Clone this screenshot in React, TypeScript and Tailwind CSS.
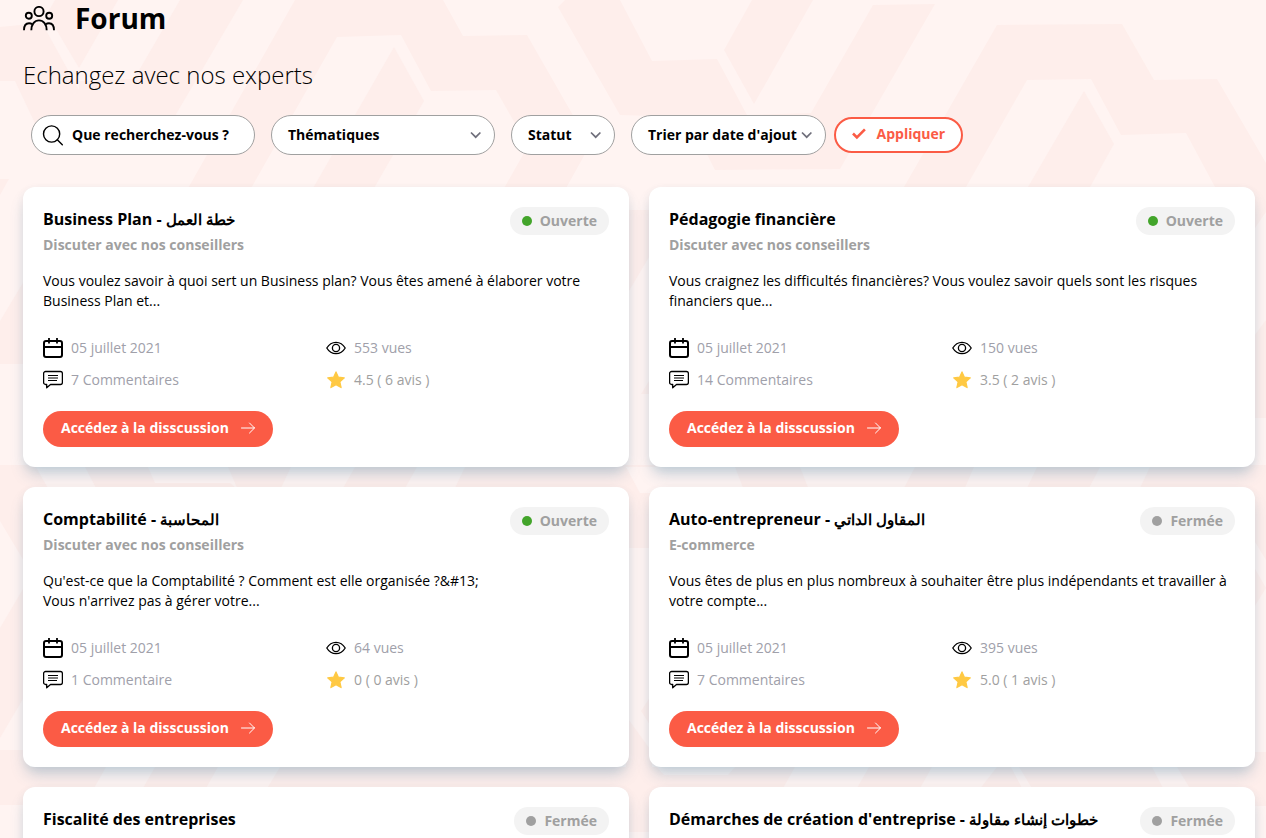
import React from "react";

type Topic = {
  title: string;
  arabic?: string;
  open: boolean;
  details?: {
    category: string;
    text: string[];
    comments: string;
    views: string;
    rating: string;
  };
};

const topics: Topic[] = [
  {
    title: "Business Plan",
    arabic: "خطة العمل",
    open: true,
    details: {
      category: "Discuter avec nos conseillers",
      text: ["Vous voulez savoir à quoi sert un Business plan? Vous êtes amené à élaborer votre", "Business Plan et..."],
      comments: "7 Commentaires",
      views: "553 vues",
      rating: "4.5 ( 6 avis )",
    },
  },
  {
    title: "Pédagogie financière",
    open: true,
    details: {
      category: "Discuter avec nos conseillers",
      text: ["Vous craignez les difficultés financières? Vous voulez savoir quels sont les risques", "financiers que..."],
      comments: "14 Commentaires",
      views: "150 vues",
      rating: "3.5 ( 2 avis )",
    },
  },
  {
    title: "Comptabilité",
    arabic: "المحاسبة",
    open: true,
    details: {
      category: "Discuter avec nos conseillers",
      text: ["Qu'est-ce que la Comptabilité ? Comment est elle organisée ?&#13;", "Vous n'arrivez pas à gérer votre..."],
      comments: "1 Commentaire",
      views: "64 vues",
      rating: "0 ( 0 avis )",
    },
  },
  {
    title: "Auto-entrepreneur",
    arabic: "المقاول الداتي",
    open: false,
    details: {
      category: "E-commerce",
      text: ["Vous êtes de plus en plus nombreux à souhaiter être plus indépendants et travailler à", "votre compte..."],
      comments: "7 Commentaires",
      views: "395 vues",
      rating: "5.0 ( 1 avis )",
    },
  },
  {
    title: "Fiscalité des entreprises",
    open: false,
  },
  {
    title: "Démarches de création d'entreprise",
    arabic: "خطوات إنشاء مقاولة",
    open: false,
  },
];

const darkShapes = [
  "0,27 42,23 79,90 79,81 134,79 180,0 243,0 165,133 40,134 15,81 0,81",
  "47,14 55,0 118,0 79,68",
  "295,0 443,0 463,36 527,35 590,145 565,190 503,190 528,146 496,90 431,91 401,35 337,37 250,190 187,190",
  "394,47 424,101 373,190 312,190",
  "565,0 620,0 652,61 717,59 747,115 811,113 873,5 935,4 840,169 715,170 688,117 620,115 558,7",
  "752,0 813,0 754,104 724,50",
  "997,25 1122,24 1154,80 1217,79 1266,163 1266,212 1240,250 1215,187 1186,133 1121,135 1091,79 1027,80 966,187 904,187",
  "1084,91 1114,144 1090,187 1028,187",
  "0,179 9,179 0,195",
  "0,321 24,281 40,364 0,364",
  "626,210 652,210 652,252 629,291 626,291",
  "641,394 652,376 652,394",
  "1240,355 1266,320 1266,418 1240,418",
  "0,465 1266,465 1266,560 1244,524 1244,500 652,500 652,548 626,548 626,500 40,500 40,588 0,521",
  "1250,560 1266,588 1250,614",
  "652,694 652,728 641,711",
  "0,628 40,560 40,670 0,738",
  "0,750 30,750 30,767 1240,767 1240,752 1266,752 1266,806 1240,806 1240,790 652,790 652,832 626,832 626,790 30,790 30,805 0,805",
  "626,716 652,752 652,767 626,767",
];

const lightShapes = [
  "36,467 85,467 97,490 49,490",
  "148,467 228,467 238,490 230,483 155,483",
  "291,467 355,467 342,490 280,490",
  "417,467 465,467 454,490 404,490",
  "626,467 735,467 745,493 640,493",
  "800,467 915,467 903,490 809,490",
  "974,467 1037,467 1026,490 964,490",
  "1100,467 1150,467 1139,490 1088,490",
  "106,767 155,767 142,790 93,790",
  "218,767 280,767 266,790 205,790",
  "657,767 735,767 728,775 664,775",
  "795,767 869,767 856,790 782,790",
  "932,767 997,767 979,790 919,790",
  "1011,767 1019,767 1033,790 1023,790",
  "1152,767 1177,767 1191,790 1164,790",
];

function Background() {
  return (
    <svg className="absolute inset-0" width="1266" height="838" viewBox="0 0 1266 838" aria-hidden="true">
      <rect width="1266" height="838" fill="#fff4f2" />
      {darkShapes.map((p) => (
        <polygon key={p} points={p} fill="#feeeeb" />
      ))}
      {lightShapes.map((p) => (
        <polygon key={p} points={p} fill="#fff4f2" />
      ))}
    </svg>
  );
}

function PeopleIcon() {
  return (
    <svg className="mt-0.5" width="32" height="26" viewBox="0 0 32 26" fill="none" stroke="#000" strokeWidth="1.9">
      <circle cx="16" cy="5.5" r="4.6" />
      <circle cx="5.8" cy="9.8" r="3" />
      <circle cx="26.2" cy="9.8" r="3" />
      <path d="M8.3 24.200c0-5.900 3.200-9.800 7.700-9.800s7.700 3.900 7.700 9.800" />
      <path d="M1 24.200c0-4.400 2-7 5-7 1.300 0 2.400.4 3.300 1.200" />
      <path d="M31 24.200c0-4.400-2-7-5-7-1.300 0-2.400.4-3.300 1.200" />
    </svg>
  );
}

function SearchIcon() {
  return (
    <svg width="21" height="21" viewBox="0 0 21 21" fill="none" stroke="#000" strokeWidth="1.4" strokeLinecap="round">
      <circle cx="9.6" cy="9" r="8.1" />
      <path d="M15.300 14.800l5 5" />
    </svg>
  );
}

function ChevronIcon() {
  return (
    <svg className="shrink-0" width="12" height="8" viewBox="0 0 12 8" fill="none" stroke="#6f6f7b" strokeWidth="1.7">
      <path d="M1 1.500l4.700 4.700 4.700-4.700" />
    </svg>
  );
}

function CalendarIcon() {
  return (
    <svg width="20" height="20" viewBox="0 0 20 20" fill="none" stroke="#000" strokeWidth="2">
      <rect x="1" y="3" width="18" height="16" rx="2" />
      <path d="M1 9h18M6 0v5.500M14 0v5.500" strokeWidth="1.8" />
    </svg>
  );
}

function CommentIcon() {
  return (
    <svg width="20" height="20" viewBox="0 0 20 20" fill="none" stroke="#000" strokeWidth="1.3" strokeLinejoin="round">
      <path d="M2.600 1.500h14.800a2 2 0 0 1 2 2v9a2 2 0 0 1-2 2H7.500L3.700 17.800v-3.300H2.600a2 2 0 0 1-2-2v-9a2 2 0 0 1 2-2z" />
      <path d="M5 5.500h10M5 8h10M5 10.500h9" strokeWidth="1.2" />
    </svg>
  );
}

function EyeIcon() {
  return (
    <svg width="20" height="20" viewBox="0 0 20 20" fill="none" stroke="#000" strokeWidth="1.3">
      <path d="M.8 10C3 6.300 6.200 4.300 10 4.300s7 2 9.200 5.700c-2.200 3.700-5.400 5.700-9.200 5.700S3 13.700.8 10z" />
      <circle cx="10" cy="10" r="3.6" />
    </svg>
  );
}

function StarIcon() {
  return (
    <svg width="20" height="20" viewBox="0 0 20 20">
      <path
        d="M10 1.900l2.400 5.300 5.900.7-4.400 3.900 1.200 5.800-5.100-2.900-5.100 2.900 1.200-5.800L1.700 7.900l5.900-.7z"
        fill="#ffc943"
        stroke="#ffc943"
        strokeWidth="1.2"
        strokeLinejoin="round"
      />
    </svg>
  );
}

function ArrowIcon() {
  return (
    <svg width="14" height="12" viewBox="0 0 14 12" fill="none" stroke="#fff" strokeWidth="1" strokeLinecap="round">
      <path d="M.5 6h13M8.500 1l5 5-5 5" />
    </svg>
  );
}

function SelectPill({ label, className }: { label: string; className: string }) {
  return (
    <button className={`flex h-10 items-center justify-between rounded-full border border-[#a0a0a0] bg-white pl-4 text-sm font-bold text-black ${className}`}>
      <span className="whitespace-nowrap">{label}</span>
      <ChevronIcon />
    </button>
  );
}

function Info({ icon, label, className }: { icon: React.ReactNode; label: string; className: string }) {
  return (
    <div className={`flex h-5 items-center gap-2 text-sm ${className}`}>
      {icon}
      <span>{label}</span>
    </div>
  );
}

function Card({ topic }: { topic: Topic }) {
  const { details } = topic;
  return (
    <article className="flex h-[280px] flex-col rounded-xl bg-white p-5 shadow-[0_10px_15px_-3px_rgba(40,110,150,0.27),0_2px_8px_rgba(50,80,100,0.06)]">
      <div className="flex items-start justify-between">
        <div>
          <h2 className="h-6 text-base leading-6 font-bold whitespace-nowrap text-black">
            {topic.title}
            {topic.arabic && (
              <>
                {" - "}
                <span className="text-[15.2px]">{topic.arabic}</span>
              </>
            )}
          </h2>
          {details && <p className="mt-1 text-sm leading-5 font-bold text-[#a0a0a0]">{details.category}</p>}
        </div>
        <span className="flex h-7 items-center gap-2 rounded-full bg-[#f3f3f3] px-3 text-sm font-bold text-[#a0a0a0]">
          <span className={`size-2.5 rounded-full ${topic.open ? "bg-[#43a52b]" : "bg-[#a0a0a0]"}`} />
          {topic.open ? "Ouverte" : "Fermée"}
        </span>
      </div>
      {details && (
        <>
          <p className="mt-4 h-10 text-sm leading-5 whitespace-nowrap text-black">
            {details.text[0]}
            <br />
            {details.text[1]}
          </p>
          <div className="mt-[27px] grid grid-cols-2 gap-y-3">
            <Info icon={<CalendarIcon />} label="05 juillet 2021" className="text-[#a0a0aa]" />
            <Info icon={<EyeIcon />} label={details.views} className="text-[#a0a0aa]" />
            <Info icon={<CommentIcon />} label={details.comments} className="text-[#a0a0aa]" />
            <Info icon={<StarIcon />} label={details.rating} className="text-[#a0a0a0]" />
          </div>
          <button className="mt-auto flex h-9 w-[230px] items-center gap-3 rounded-full bg-[#fb5b45] pb-0.5 pl-[18px] text-sm font-bold whitespace-nowrap text-white">
            Accédez à la disscussion
            <ArrowIcon />
          </button>
        </>
      )}
    </article>
  );
}

export default function App() {
  return (
    <div className="relative h-[838px] w-[1266px] overflow-hidden font-['Open_Sans','Noto_Sans',sans-serif]">
      <Background />
      <main className="relative pr-[11px] pl-[23px]">
        <header className="flex h-9 items-center gap-5">
          <PeopleIcon />
          <h1 className="text-[28px] leading-9 font-bold text-black">Forum</h1>
        </header>
        <p className="mt-[21px] h-9 text-2xl leading-9 font-light text-black">Echangez avec nos experts</p>
        <form className="mt-[22px] flex h-10 items-center pl-2">
          <label className="flex h-10 w-56 items-center gap-[9px] rounded-full border border-[#a0a0a0] bg-white pl-2.5">
            <SearchIcon />
            <span className="text-sm font-bold text-black">Que recherchez-vous ?</span>
          </label>
          <SelectPill label="Thématiques" className="ml-4 w-56 pr-3" />
          <SelectPill label="Statut" className="ml-4 w-[104px] pr-3" />
          <SelectPill label="Trier par date d'ajout" className="ml-4 w-[195px] pr-3" />
          <button className="ml-2 flex h-9 w-[129px] items-center gap-[11px] rounded-full border-2 border-[#fb5b45] bg-white pb-0.5 pl-[15.5px] text-sm font-bold text-[#fb5b45]">
            <svg width="14" height="12" viewBox="0 0 14 12" fill="none" stroke="#fb5b45" strokeWidth="2.6">
              <path d="M1 5.500l3.900 3.900 8-8" />
            </svg>
            Appliquer
          </button>
        </form>
        <section className="mt-8 grid grid-cols-2 gap-5">
          {topics.map((topic) => (
            <Card key={topic.title} topic={topic} />
          ))}
        </section>
      </main>
    </div>
  );
}
